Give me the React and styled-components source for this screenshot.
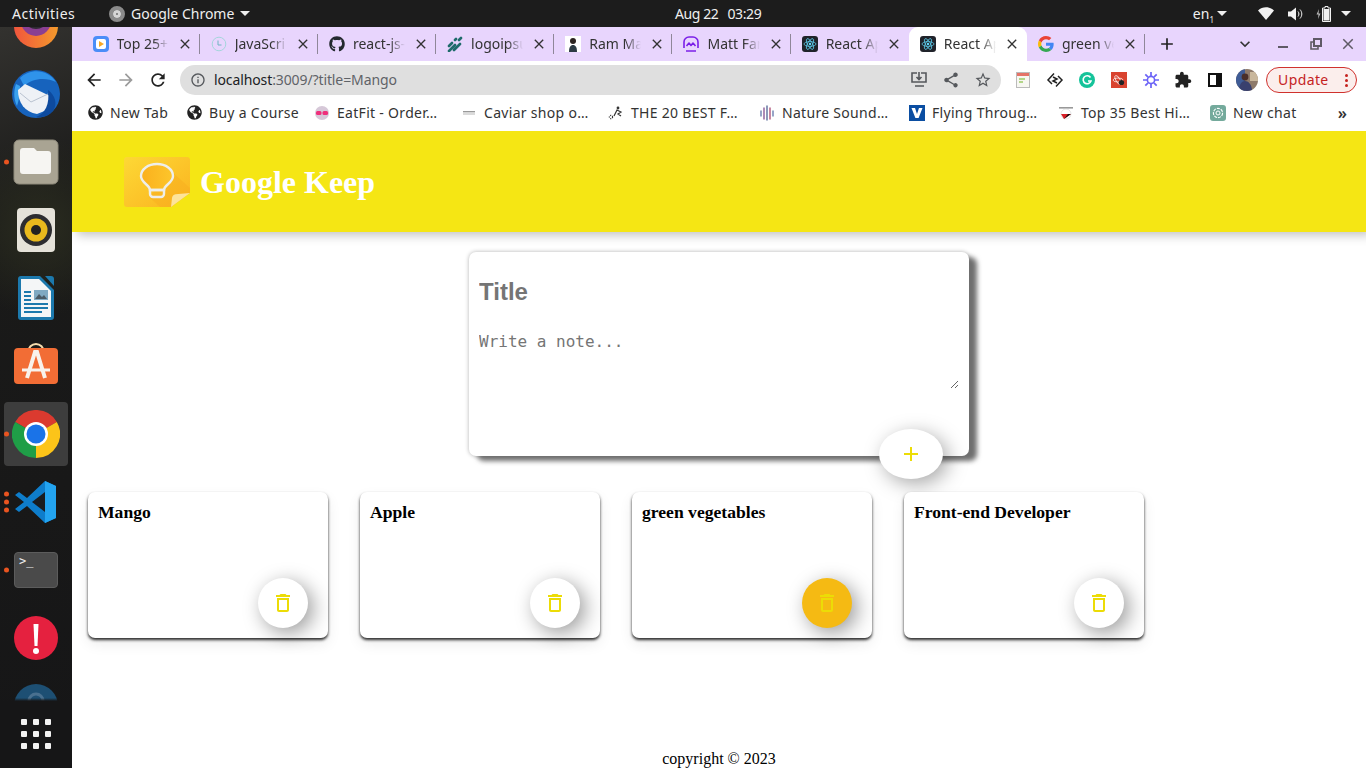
import React from 'react';
import styled, { createGlobalStyle } from 'styled-components';
import { FaGithub, FaGlobeAmericas } from 'react-icons/fa';

const UI_FONT = '"Noto Sans", "Open Sans", sans-serif';
const SERIF = '"Liberation Serif", "Times New Roman", serif';

const GlobalStyle = createGlobalStyle`
    html, body {
        margin: 0;
        height: 100%;
        overflow: hidden;
    }
    #root {
        height: 768px;
    }
`;

const paths = {
    back: 'M20 11H7.83l5.59-5.59L12 4l-8 8 8 8 1.41-1.41L7.83 13H20v-2z',
    forward: 'M12 4l-1.41 1.41L16.17 11H4v2h12.17l-5.58 5.59L12 20l8-8z',
    reload: 'M17.65 6.35C16.2 4.9 14.21 4 12 4c-4.42 0-7.99 3.58-7.99 8s3.57 8 7.99 8c3.73 0 6.84-2.55 7.73-6h-2.08c-.82 2.33-3.04 4-5.65 4-3.31 0-6-2.69-6-6s2.69-6 6-6c1.66 0 3.14.69 4.22 1.78L13 11h7V4l-2.35 2.35z',
    close: 'M19 6.41L17.59 5 12 10.59 6.41 5 5 6.41 10.59 12 5 17.59 6.41 19 12 13.41 17.59 19 19 17.59 13.41 12z',
    add: 'M19 13h-6v6h-2v-6H5v-2h6V5h2v6h6v2z',
    chevron: 'M7.41 8.59L12 13.17l4.59-4.58L18 10l-6 6-6-6z',
    info: 'M11 7h2v2h-2zm0 4h2v6h-2zm1-9C6.48 2 2 6.48 2 12s4.48 10 10 10 10-4.48 10-10S17.52 2 12 2zm0 18c-4.41 0-8-3.59-8-8s3.59-8 8-8 8 3.59 8 8-3.59 8-8 8z',
    share: 'M18 16.08c-.76 0-1.44.3-1.96.77L8.91 12.7c.05-.23.09-.46.09-.7s-.04-.47-.09-.7l7.05-4.11c.54.5 1.25.81 2.04.81 1.66 0 3-1.34 3-3s-1.34-3-3-3-3 1.34-3 3c0 .24.04.47.09.7L8.04 9.81C7.5 9.31 6.79 9 6 9c-1.66 0-3 1.34-3 3s1.34 3 3 3c.79 0 1.5-.31 2.04-.81l7.12 4.16c-.05.21-.08.43-.08.65 0 1.61 1.31 2.92 2.92 2.92s2.92-1.31 2.92-2.92-1.31-2.92-2.92-2.92z',
    star: 'M22 9.24l-7.19-.62L12 2 9.19 8.63 2 9.24l5.46 4.73L5.82 21 12 17.27 18.18 21l-1.63-7.03L22 9.24zM12 15.4l-3.76 2.27 1-4.28-3.32-2.88 4.38-.38L12 6.1l1.71 4.04 4.38.38-3.32 2.88 1 4.28L12 15.4z',
    trash: 'M6 19c0 1.1.9 2 2 2h8c1.1 0 2-.9 2-2V7H6v12zM8 9h8v10H8V9zm7.5-5l-1-1h-5l-1 1H5v2h14V4h-3.5z',
    puzzle: 'M20.5 11H19V7c0-1.1-.9-2-2-2h-4V3.5C13 2.12 11.88 1 10.5 1S8 2.12 8 3.5V5H4c-1.1 0-1.99.9-1.99 2v3.8H3.5c1.49 0 2.7 1.21 2.7 2.7s-1.21 2.7-2.7 2.7H2V20c0 1.1.9 2 2 2h3.8v-1.5c0-1.49 1.21-2.7 2.7-2.7 1.49 0 2.7 1.21 2.7 2.7V22H17c1.1 0 2-.9 2-2v-4h1.5c1.38 0 2.5-1.12 2.5-2.5S21.88 11 20.5 11z',
};

const Glyph = ({ name, size = 16, color = 'currentColor' }) => (
    <svg width={size} height={size} viewBox="0 0 24 24" fill={color} style={{ flex: 'none' }}>
        <path d={paths[name]} />
    </svg>
);

/* ---------- favicons ---------- */

const PlayFav = () => (
    <svg width="16" height="16" viewBox="0 0 16 16">
        <rect width="16" height="16" rx="4" fill="#4b8df8" />
        <rect x="3" y="3" width="10" height="10" rx="2" fill="#fff" />
        <path d="M6 5l5 3-5 3z" fill="#f9a825" />
    </svg>
);

const ClockFav = () => (
    <svg width="16" height="16" viewBox="0 0 16 16" fill="none" stroke="#a5d5dc" strokeWidth="1">
        <circle cx="8" cy="8" r="6.8" />
        <path d="M7 4.5V9h3.5" stroke="#6fb5c2" />
    </svg>
);

const LogoipsumFav = () => (
    <svg width="16" height="16" viewBox="0 0 16 16" fill="none" stroke="#1e6b6b" strokeWidth="2.6" strokeLinecap="round">
        <path d="M2 10l3-3M2 15l6-6M7 14l6-6M9 3L8 4M14 2l-2 2" />
    </svg>
);

const PortraitFav = () => (
    <svg width="16" height="16" viewBox="0 0 16 16">
        <rect width="16" height="16" fill="#fff" />
        <circle cx="8" cy="5" r="3" fill="#2b2320" />
        <path d="M4 16c0-5 1.500-7 4-7s4 2 4 7z" fill="#2c3a44" />
    </svg>
);

const MattFav = () => (
    <svg width="16" height="16" viewBox="0 0 16 16" fill="none" stroke="#7b1fe8" strokeWidth="1.6" strokeLinejoin="round">
        <path d="M1 12V6a5 5 0 0 1 5-5h4a5 5 0 0 1 5 5v6M3 15h10" />
        <path d="M3.500 10l2.500-3 2 2.500L10 7l2.500 3" />
    </svg>
);

const ReactFav = () => (
    <svg width="16" height="16" viewBox="0 0 16 16" fill="none" stroke="#61dafb" strokeWidth=".7">
        <rect width="16" height="16" rx="3" fill="#20232a" stroke="none" />
        <ellipse cx="8" cy="8" rx="6" ry="2.4" />
        <ellipse cx="8" cy="8" rx="6" ry="2.4" transform="rotate(60 8 8)" />
        <ellipse cx="8" cy="8" rx="6" ry="2.4" transform="rotate(120 8 8)" />
        <circle cx="8" cy="8" r="1.2" fill="#61dafb" stroke="none" />
    </svg>
);

const GoogleFav = () => (
    <svg width="16" height="16" viewBox="0 0 48 48">
        <path fill="#EA4335" d="M24 9.5c3.54 0 6.71 1.22 9.21 3.6l6.85-6.85C35.9 2.38 30.47 0 24 0 14.62 0 6.51 5.38 2.56 13.22l7.98 6.19C12.43 13.72 17.74 9.5 24 9.5z" />
        <path fill="#4285F4" d="M46.98 24.55c0-1.57-.15-3.09-.38-4.55H24v9.02h12.94c-.58 2.96-2.26 5.48-4.78 7.18l7.73 6c4.51-4.18 7.09-10.36 7.09-17.65z" />
        <path fill="#FBBC05" d="M10.53 28.59c-.48-1.45-.76-2.99-.76-4.59s.27-3.14.76-4.59l-7.98-6.19C.92 16.46 0 20.12 0 24c0 3.88.92 7.54 2.56 10.78l7.97-6.19z" />
        <path fill="#34A853" d="M24 48c6.48 0 11.93-2.13 15.89-5.81l-7.73-6c-2.15 1.45-4.92 2.3-8.16 2.3-6.26 0-11.57-4.22-13.47-9.91l-7.98 6.19C6.51 42.62 14.62 48 24 48z" />
    </svg>
);

const tabs = [
    { title: 'Top 25+', icon: <PlayFav /> },
    { title: 'JavaScri', icon: <ClockFav /> },
    { title: 'react-js-', icon: <FaGithub size={16} color="#24292f" /> },
    { title: 'logoipsu', icon: <LogoipsumFav /> },
    { title: 'Ram Ma', icon: <PortraitFav /> },
    { title: 'Matt Far', icon: <MattFav /> },
    { title: 'React Ap', icon: <ReactFav /> },
    { title: 'React Ap', icon: <ReactFav />, active: true },
    { title: 'green ve', icon: <GoogleFav /> },
];

/* ---------- bookmark and extension icons ---------- */

const EatFitMark = () => (
    <svg width="16" height="16" viewBox="0 0 16 16">
        <circle cx="8" cy="8" r="7" fill="#d6c8d8" />
        <rect x="2" y="6" width="5.5" height="4" rx="1.5" fill="#ef2f7b" />
        <rect x="8.5" y="6" width="5.5" height="4" rx="1.5" fill="#ef2f7b" />
    </svg>
);

const CaviarMark = () => (
    <svg width="16" height="16" viewBox="0 0 16 16" fill="#9a9a9a">
        <rect x="2" y="6" width="12" height="1.4" />
        <rect x="2" y="8.4" width="12" height="1.2" fill="#c4c4c4" />
    </svg>
);

const RiderMark = () => (
    <svg width="16" height="16" viewBox="0 0 16 16" fill="none" stroke="#333" strokeWidth="1.2">
        <circle cx="3" cy="12" r="1.6" strokeDasharray="1 1" />
        <path d="M6 11l3-6 4 2-3 2 3 2" />
        <circle cx="10" cy="3" r="1.4" fill="#333" stroke="none" />
    </svg>
);

const NatureMark = () => (
    <svg width="16" height="16" viewBox="0 0 16 16" strokeWidth="1.4" strokeLinecap="round">
        <path d="M2 6v5" stroke="#6a7fb0" />
        <path d="M5 3v11" stroke="#8a5a98" />
        <path d="M8 1v14" stroke="#5b6e9c" />
        <path d="M11 3v11" stroke="#b0557a" />
        <path d="M14 6v5" stroke="#6a7fb0" />
    </svg>
);

const VimeoMark = () => (
    <svg width="16" height="16" viewBox="0 0 16 16">
        <rect width="16" height="16" fill="#0b4ea2" />
        <path d="M2.500 3H6l2 6 2-6h3.500L9.600 13H6.400z" fill="#fff" />
    </svg>
);

const HikesMark = () => (
    <svg width="16" height="16" viewBox="0 0 16 16">
        <rect x="1" y="2" width="14" height="1.6" fill="#999" />
        <circle cx="8" cy="9" r="5" fill="#fff" stroke="#ccc" strokeWidth=".5" />
        <path d="M3 9h10l-7 5z" fill="#d81f26" />
        <path d="M6 14l4-5h3z" fill="#111" />
    </svg>
);

const ChatGptMark = () => (
    <svg width="16" height="16" viewBox="0 0 16 16" fill="none">
        <rect width="16" height="16" rx="3" fill="#74aa9c" />
        <circle cx="8" cy="8" r="4.6" stroke="#fff" strokeWidth="1.1" strokeDasharray="3 1" />
        <circle cx="8" cy="8" r="2" stroke="#fff" strokeWidth="1" />
    </svg>
);

const bookmarks = [
    { label: 'New Tab', width: 60, icon: <FaGlobeAmericas size={15} color="#222" /> },
    { label: 'Buy a Course', width: 89, icon: <FaGlobeAmericas size={15} color="#222" /> },
    { label: 'EatFit - Order…', width: 108, icon: <EatFitMark /> },
    { label: 'Caviar shop o…', width: 108, icon: <CaviarMark /> },
    { label: 'THE 20 BEST F…', width: 112, icon: <RiderMark /> },
    { label: 'Nature Sound…', width: 111, icon: <NatureMark /> },
    { label: 'Flying Throug…', width: 110, icon: <VimeoMark /> },
    { label: 'Top 35 Best Hi…', width: 113, icon: <HikesMark /> },
    { label: 'New chat', width: 66, icon: <ChatGptMark /> },
];

const extensions = [
    <svg key="notes" width="16" height="16" viewBox="0 0 16 16">
        <rect x="1.500" y=".5" width="13" height="15" fill="#f7f7f2" stroke="#bbb" />
        <rect x="2" y="1" width="12" height="3" fill="#e57368" />
        <path d="M4 7h6M4 10h4" stroke="#9ccc65" strokeWidth="1.4" />
    </svg>,
    <svg key="diamond" width="18" height="18" viewBox="0 0 18 18" fill="none" stroke="#222" strokeWidth="1.5">
        <path d="M8 2.500L2 9l4 4M10 15.500L16 9l-4-4M7 6l4 2-4 2 4 2" />
    </svg>,
    <svg key="grammarly" width="16" height="16" viewBox="0 0 16 16" fill="none">
        <circle cx="8" cy="8" r="8" fill="#15c39a" />
        <path d="M11.500 5.500A4 4 0 1 0 12 9H9" stroke="#fff" strokeWidth="1.6" />
    </svg>,
    <svg key="bug" width="16" height="16" viewBox="0 0 16 16" fill="none">
        <rect width="16" height="16" fill="#d9432f" />
        <ellipse cx="7" cy="8" rx="5" ry="2" stroke="#fff" strokeWidth=".7" />
        <ellipse cx="7" cy="8" rx="5" ry="2" stroke="#fff" strokeWidth=".7" transform="rotate(60 7 8)" />
        <circle cx="10.500" cy="10.500" r="2.600" fill="#222" />
    </svg>,
    <svg key="burst" width="16" height="16" viewBox="0 0 16 16" fill="none" stroke="#6b63f6">
        <circle cx="8" cy="8" r="3.600" strokeWidth="1.600" />
        <path d="M8 0v4M8 12v4M0 8h4M12 8h4M2.300 2.300l2.800 2.800M10.900 10.900l2.800 2.800M13.700 2.300l-2.800 2.800M5.100 10.900l-2.800 2.800" strokeWidth="1.700" />
    </svg>,
    <Glyph key="puzzle" name="puzzle" size={18} color="#222" />,
    <svg key="panel" width="16" height="16" viewBox="0 0 16 16">
        <rect x="2" y="2" width="12" height="12" fill="none" stroke="#111" strokeWidth="2" />
        <rect x="9" y="2" width="5" height="12" fill="#111" />
    </svg>,
    <svg key="avatar" width="22" height="22" viewBox="0 0 22 22">
        <defs>
            <clipPath id="avatarClip"><circle cx="11" cy="11" r="11" /></clipPath>
        </defs>
        <g clipPath="url(#avatarClip)">
            <rect width="22" height="22" fill="#8e7a6a" />
            <rect width="9" height="22" fill="#3f5c96" />
            <rect x="14" y="3" width="8" height="9" fill="#c9b79c" />
            <circle cx="9" cy="8" r="3.400" fill="#4a2f2a" />
            <path d="M3 22c0-7 3-10 6-10s7 3 7 10z" fill="#39406e" />
        </g>
    </svg>,
];

/* ---------- dock icons ---------- */

const FirefoxIcon = () => (
    <svg width="44" height="44" viewBox="0 0 44 44">
        <defs>
            <linearGradient id="foxRing" x1="0" y1="0" x2="1" y2="0">
                <stop offset="0" stopColor="#f0553d" />
                <stop offset="1" stopColor="#f49a2c" />
            </linearGradient>
        </defs>
        <circle cx="22" cy="22" r="22" fill="url(#foxRing)" />
        <circle cx="22" cy="17" r="15" fill="#8a3f92" />
        <circle cx="22" cy="12" r="13" fill="#2e2a33" />
    </svg>
);

const ThunderbirdIcon = () => (
    <svg width="48" height="48" viewBox="0 0 48 48">
        <circle cx="24" cy="24" r="24" fill="#1763bd" />
        <path d="M8 8C18-2 36-1 44 12 34 7 20 8 12 16z" fill="#2f93ea" />
        <path d="M4 14c-2 6-3 14 1 22 2-6 3-14 3-20z" fill="#3aa2ef" />
        <path d="M6 20l7-6 25 12-3 14-10 4C13 42 6 33 6 20z" fill="#eef1f6" />
        <path d="M8 23l11 9 17-8" fill="none" stroke="#b9c2d0" strokeWidth="1" />
        <path d="M36 20c7 5 10 14 5 21-4 5-10 7-17 6 9-3 14-13 12-27z" fill="#0d4a9e" />
    </svg>
);

const FilesIcon = () => (
    <svg width="46" height="46" viewBox="0 0 46 46">
        <rect x="1" y="1" width="44" height="44" rx="5" fill="#a9a493" stroke="#8e8a7b" />
        <path d="M7 12a3 3 0 0 1 3-3h11l3 3h11a3 3 0 0 1 3 3v17a3 3 0 0 1-3 3H10a3 3 0 0 1-3-3z" fill="#f6f5f2" />
    </svg>
);

const RhythmboxIcon = () => (
    <svg width="38" height="44" viewBox="0 0 38 44">
        <rect width="38" height="44" rx="4" fill="#e5e2d9" />
        <circle cx="19" cy="22" r="16" fill="#2d2d30" />
        <circle cx="19" cy="22" r="11.500" fill="#e9b91d" />
        <circle cx="19" cy="22" r="5" fill="#222" />
    </svg>
);

const WriterIcon = () => (
    <svg width="36" height="44" viewBox="0 0 36 44">
        <path d="M0 3a3 3 0 0 1 3-3h19l14 14v27a3 3 0 0 1-3 3H3a3 3 0 0 1-3-3z" fill="#1c79ad" />
        <path d="M3 3h18l12 12v26H3z" fill="#f4f6f7" />
        <path d="M27 0h6a3 3 0 0 1 3 3v7z" fill="#1c79ad" />
        <path d="M6 16h7M6 20h7M6 24h7M6 28h24M6 32h24M6 36h18" stroke="#1c79ad" strokeWidth="1.800" />
        <rect x="16" y="14" width="14" height="10" fill="#7fa9c2" />
        <path d="M17 23l4-5 3 3 2-2 3 4z" fill="#4b5b66" />
    </svg>
);

const SoftwareIcon = () => (
    <svg width="44" height="48" viewBox="0 0 44 48">
        <path d="M14 11c0-12 16-12 16 0" fill="none" stroke="#f4dcae" strokeWidth="2" />
        <rect y="6" width="44" height="36" rx="4" fill="#f26d35" />
        <path d="M13 36l8-26h2l8 26" fill="none" stroke="#f8f2ec" strokeWidth="4" />
        <path d="M8 28h28" stroke="#f8f2ec" strokeWidth="3" />
    </svg>
);

const ChromeIcon = () => (
    <svg width="48" height="48" viewBox="0 0 48 48">
        <path d="M24 24L3.200 12A24 24 0 0 1 44.800 12z" fill="#db3a2f" />
        <path d="M24 24L44.800 12A24 24 0 0 1 24 48z" fill="#fcc419" />
        <path d="M24 24V48A24 24 0 0 1 3.200 12z" fill="#1f9e47" />
        <circle cx="24" cy="24" r="12" fill="#fff" />
        <circle cx="24" cy="24" r="9.500" fill="#1a73e8" />
    </svg>
);

const VsCodeIcon = () => (
    <svg width="44" height="44" viewBox="0 0 44 44">
        <path d="M31 1l11 5v32l-11 5L13 26l-8 6-4-3 9-7-9-7 4-3 8 6z" fill="#0e7dcb" />
        <path d="M31 1l11 5v32l-11 5z" fill="#23a4f0" />
        <path d="M31 12L18 22l13 10z" fill="#1a1d20" />
    </svg>
);

const AlertIcon = () => (
    <svg width="44" height="44" viewBox="0 0 44 44">
        <circle cx="22" cy="22" r="22" fill="#e5213f" />
        <path d="M19.500 8h5l-1 22h-3z" fill="#fff" />
        <circle cx="22" cy="35" r="3" fill="#fff" />
    </svg>
);

const LastIcon = () => (
    <svg width="44" height="44" viewBox="0 0 44 44">
        <circle cx="22" cy="22" r="22" fill="#1d4f73" />
        <circle cx="22" cy="17" r="7" fill="none" stroke="#49708f" strokeWidth="3" />
    </svg>
);

/* ---------- system tray ---------- */

const WifiIcon = () => (
    <svg width="16" height="13" viewBox="0 0 16 13">
        <path d="M8 13L0 3.500C4.500-.8 11.500-.8 16 3.500z" fill="#f2f2f2" />
    </svg>
);

const VolumeIcon = () => (
    <svg width="16" height="14" viewBox="0 0 16 14" fill="none">
        <path d="M0 4.500h3L8 .5v13l-5-4H0z" fill="#f2f2f2" />
        <path d="M10 4.500c1.200 1.500 1.200 3.500 0 5M12 2.500c2.400 2.800 2.400 6.200 0 9" stroke="#f2f2f2" />
    </svg>
);

const BatteryIcon = () => (
    <svg width="16" height="16" viewBox="0 0 16 16" fill="none">
        <path d="M3 3L.5 8.500h2L2 13l2.500-5.500h-2z" fill="#b9b9b9" />
        <path d="M9 .5h3v1.500h2.500v13.500h-8V2H9z" stroke="#f2f2f2" />
        <rect x="7.500" y="3" width="6" height="11.500" fill="#f2f2f2" />
    </svg>
);

const Caret = styled.span`
    flex: none;
    width: 0;
    height: 0;
    border-left: 5px solid transparent;
    border-right: 5px solid transparent;
    border-top: 5px solid #eee;
`;

/* ---------- layout ---------- */

const Desktop = styled.div`
    width: 1366px;
    height: 768px;
    display: flex;
    flex-direction: column;
    overflow: hidden;
    font-family: ${UI_FONT};
`;

const TopBar = styled.header`
    flex: none;
    height: 27px;
    background: #1c1c1c;
    color: #efefef;
    font-size: 14px;
    display: flex;
    align-items: center;
    padding-left: 12px;
`;

const Activities = styled.span`
    width: 97px;
    letter-spacing: 0.5px;
`;

const AppMenu = styled.span`
    width: 566px;
    display: flex;
    align-items: center;
    gap: 6px;
`;

const AppBadge = styled.span`
    width: 16px;
    height: 16px;
    box-sizing: border-box;
    border-radius: 50%;
    background: #6d6d6d;
    border: 4px solid #8b8b8b;
    box-shadow: inset 0 0 0 3px #d6d6d6;
`;

const Clock = styled.span`
    display: flex;
    gap: 9px;
    letter-spacing: -0.4px;
`;

const Tray = styled.div`
    margin-left: auto;
    display: flex;
    align-items: center;
    padding-right: 15px;
`;

const TrayItem = styled.span`
    display: flex;
    margin-left: ${(p) => p.$gap}px;
`;

const Sub = styled.sub`
    font-size: 8px;
    line-height: 0;
`;

const Main = styled.div`
    flex: 1;
    min-height: 0;
    display: flex;
`;

const Dock = styled.aside`
    flex: none;
    width: 72px;
    position: relative;
    overflow: hidden;
    background:
        radial-gradient(circle at 40px 200px, #2a2c1f 0, transparent 90px),
        linear-gradient(160deg, #33322f 0, #1a1a19 25%, #161617 100%);
`;

const DockList = styled.div`
    margin-top: -35px;
    display: flex;
    flex-direction: column;
`;

const DockItem = styled.div`
    flex: none;
    height: 68px;
    display: flex;
    align-items: center;
    justify-content: center;
    position: relative;
`;

const Highlight = styled.div`
    width: 64px;
    height: 64px;
    border-radius: 4px;
    background: rgba(255, 255, 255, 0.16);
    display: flex;
    align-items: center;
    justify-content: center;
`;

const RunDots = styled.div`
    position: absolute;
    left: 4px;
    top: 50%;
    transform: translateY(-50%);
    display: flex;
    flex-direction: column;
    gap: 3px;
`;

const RunDot = styled.span`
    width: 5px;
    height: 5px;
    border-radius: 50%;
    background: #e95420;
`;

const TerminalTile = styled.div`
    width: 44px;
    height: 36px;
    box-sizing: border-box;
    border-radius: 4px;
    background: #4a4a4a;
    border: 1px solid #5c5c5c;
    color: #eee;
    font: 12px/12px "DejaVu Sans Mono", monospace;
    padding: 2px 4px;
`;

const AppGrid = styled.div`
    position: absolute;
    left: 0;
    right: 0;
    bottom: 0;
    height: 70px;
    background: linear-gradient(#16161700, #161617 3px);
    display: flex;
    align-items: flex-start;
    justify-content: center;
    padding-top: 21px;
    box-sizing: border-box;
`;

const GridDots = styled.div`
    display: grid;
    grid-template-columns: repeat(3, 6px);
    gap: 6px;
`;

const GridDot = styled.span`
    width: 6px;
    height: 6px;
    border-radius: 1px;
    background: #f2f2f2;
`;

const Browser = styled.div`
    flex: 1;
    min-width: 0;
    display: flex;
    flex-direction: column;
    background: #fff;
`;

const TabStrip = styled.div`
    flex: none;
    height: 34px;
    background: #e8d5fd;
    display: flex;
    align-items: stretch;
    padding-left: 9.5px;
    color: #333;
`;

const Tab = styled.div`
    flex: none;
    width: 118.2px;
    box-sizing: border-box;
    padding: 0 7px 0 11px;
    display: flex;
    align-items: center;
    gap: 8px;
    position: relative;
    font-size: 14px;
    background: ${(p) => (p.$active ? '#fff' : 'transparent')};
    border-radius: 9px 9px 0 0;

    &::after {
        content: '';
        display: ${(p) => (p.$divider ? 'block' : 'none')};
        position: absolute;
        right: 0;
        top: 7px;
        bottom: 7px;
        width: 1px;
        background: #8f8799;
    }
`;

const TabTitle = styled.span`
    flex: 1;
    min-width: 0;
    padding-bottom: 2px;
    white-space: nowrap;
    -webkit-mask-image: linear-gradient(to right, #000 70%, transparent 100%);
    mask-image: linear-gradient(to right, #000 70%, transparent 100%);
`;

const NewTab = styled.span`
    display: flex;
    margin-left: 12px;
    align-self: center;
    color: #222;
`;

const TabSearch = styled.span`
    display: flex;
    margin-left: 58px;
    align-self: center;
    color: #333;
`;

const WindowControls = styled.div`
    margin-left: auto;
    padding-right: 9px;
    display: flex;
    align-items: center;
    gap: 14.5px;
    color: #5f5a66;
`;

const Toolbar = styled.div`
    flex: none;
    height: 35px;
    box-sizing: border-box;
    padding: 4px 0 1px 12px;
    display: flex;
    align-items: center;
    background: #fff;
`;

const NavIcons = styled.div`
    display: flex;
    gap: 12px;
    color: #222;
`;

const NavButton = styled.span`
    display: flex;
    color: ${(p) => (p.$off ? '#9b9b9b' : '#222')};
`;

const Omnibox = styled.div`
    flex: none;
    width: 821px;
    height: 30px;
    margin-left: 12px;
    box-sizing: border-box;
    padding: 0 9px 0 10px;
    border-radius: 15px;
    background: #dfdfdf;
    display: flex;
    align-items: center;
    color: #55585c;
`;

const Url = styled.span`
    margin-left: 8px;
    padding-bottom: 2px;
    font-size: 14px;
    letter-spacing: -0.11px;
    color: #5f6368;
`;

const Host = styled.span`
    color: #202124;
`;

const OmniActions = styled.div`
    margin-left: auto;
    display: flex;
    gap: 14px;
`;

const Extensions = styled.div`
    margin-left: 6px;
    display: flex;
`;

const ExtensionSlot = styled.span`
    width: 32px;
    display: flex;
    align-items: center;
    justify-content: center;
`;

const UpdatePill = styled.div`
    width: 91px;
    height: 26px;
    margin-left: 3px;
    box-sizing: border-box;
    border: 1px solid #d0312d;
    border-radius: 13px;
    background: #fbeeec;
    color: #c5221f;
    font-size: 14px;
    letter-spacing: 0.4px;
    display: flex;
    align-items: center;
    padding: 0 8px 2px 11px;
`;

const KebabDots = styled.span`
    margin-left: auto;
    padding-top: 2px;
    display: flex;
    flex-direction: column;
    gap: 2px;
`;

const KebabDot = styled.i`
    width: 3px;
    height: 3px;
    border-radius: 50%;
    background: #c5221f;
`;

const BookmarkBar = styled.div`
    flex: none;
    height: 35px;
    box-sizing: border-box;
    padding: 0 0 2px 15px;
    display: flex;
    align-items: center;
    gap: 16px;
    background: #fff;
    font-size: 14px;
    color: #333;
`;

const Bookmark = styled.span`
    flex: none;
    display: flex;
    align-items: center;
    gap: 7px;
`;

const BookmarkIcon = styled.span`
    width: 16px;
    height: 16px;
    display: flex;
    align-items: center;
    justify-content: center;
`;

const BookmarkLabel = styled.span`
    width: ${(p) => p.$width}px;
    white-space: nowrap;
    letter-spacing: 0.3px;
`;

const MoreBookmarks = styled.span`
    margin-left: auto;
    padding-right: 19px;
    font-size: 16px;
    font-weight: 600;
    color: #333;
`;

/* ---------- the keep app ---------- */

const Page = styled.main`
    flex: 1;
    min-height: 0;
    display: flex;
    flex-direction: column;
    background: #fff;
    overflow: hidden;
    font-family: ${SERIF};
`;

const AppHeader = styled.div`
    flex: none;
    height: 101px;
    box-sizing: border-box;
    padding-left: 52px;
    display: flex;
    align-items: center;
    gap: 10px;
    background: #f5e614;
    box-shadow: 5px 3px 10px rgba(0, 0, 0, 0.25);
    position: relative;
`;

const AppTitle = styled.h1`
    margin: 2px 0 0;
    font-size: 32px;
    font-weight: bold;
    color: #fff;
`;

const NoteForm = styled.form`
    flex: none;
    width: 500px;
    height: 204px;
    box-sizing: border-box;
    margin: 20px auto 0;
    padding: 26px 10px;
    display: flex;
    flex-direction: column;
    gap: 26px;
    border-radius: 7px;
    background: #fff;
    box-shadow: 8px 5px 5px #6f6f6f, 0 0 4px rgba(0, 0, 0, 0.3);
    position: relative;
`;

const TitleInput = styled.input`
    border: none;
    outline: none;
    padding: 0;
    height: 28px;
    font-family: "Liberation Sans", Arial, sans-serif;
    font-size: 24px;
    font-weight: bold;
`;

const NoteInput = styled.textarea`
    border: none;
    outline: none;
    padding: 0;
    font-family: "DejaVu Sans Mono", monospace;
    font-size: 16px;
`;

const AddButton = styled.button`
    position: absolute;
    right: 26px;
    bottom: -23px;
    width: 64px;
    height: 50px;
    border: none;
    border-radius: 50%;
    background: #fff;
    display: flex;
    align-items: center;
    justify-content: center;
    padding: 0;
    box-shadow: 5px 5px 20px rgba(0, 0, 0, 0.35);
`;

const CardRow = styled.div`
    flex: none;
    margin-top: 36px;
    padding-left: 16px;
    display: flex;
    gap: 32px;
`;

const Card = styled.article`
    width: 240px;
    height: 146px;
    box-sizing: border-box;
    padding: 10px;
    border-radius: 7px;
    background: #fff;
    box-shadow: 0 2px 3px #2a2a2a, 0 6px 14px rgba(0, 0, 0, 0.08);
    position: relative;
`;

const CardTitle = styled.h2`
    margin: 0;
    font-size: 17.6px;
    line-height: 21px;
    font-weight: bold;
    color: #000;
`;

const DeleteButton = styled.button`
    position: absolute;
    right: 20px;
    bottom: 10px;
    width: 50px;
    height: 50px;
    border: none;
    border-radius: 50%;
    padding: 0;
    background: ${(p) => (p.$hover ? '#f5ba13' : '#fff')};
    display: flex;
    align-items: center;
    justify-content: center;
    box-shadow: 5px 5px 20px rgba(0, 0, 0, 0.4);
`;

const Footer = styled.footer`
    margin-top: auto;
    text-align: center;
    font-size: 16px;
    line-height: 18px;
    color: #000;
`;

const KeepLogo = () => (
    <svg width="66" height="50" viewBox="0 0 66 50">
        <defs>
            <linearGradient id="noteFill" x1="0" y1="0" x2="1" y2="1">
                <stop offset="0" stopColor="#fdd835" />
                <stop offset="1" stopColor="#fbb31f" />
            </linearGradient>
            <linearGradient id="bulbFill" x1="0" y1="0" x2="1" y2="0">
                <stop offset="0" stopColor="#fbb01d" />
                <stop offset="1" stopColor="#fdc62b" />
            </linearGradient>
        </defs>
        <path d="M3 0h60a3 3 0 0 1 3 3v33L47 50H3a3 3 0 0 1-3-3V3a3 3 0 0 1 3-3z" fill="url(#noteFill)" />
        <path d="M47 14l19 17v5L47 50H36L25 40z" fill="#f7ab1e" opacity=".4" />
        <path d="M47 50l1-9c.2-2 1.500-3.500 3.500-3.800L66 36z" fill="#fde39a" />
        <path d="M26 33c0-5-9-7-9-14a16 12 0 0 1 32 0c0 7-9 9-9 14z" fill="url(#bulbFill)" stroke="#eeeeea" strokeWidth="2.400" />
        <path d="M26 33h14v4a3 3 0 0 1-3 3h-8a3 3 0 0 1-3-3z" fill="none" stroke="#eeeeea" strokeWidth="2.400" />
    </svg>
);

const notes = ['Mango', 'Apple', 'green vegetables', 'Front-end Developer'];

const App = () => {
    return (
        <Desktop>
            <GlobalStyle />
            <TopBar>
                <Activities>Activities</Activities>
                <AppMenu>
                    <AppBadge />
                    Google Chrome
                    <Caret />
                </AppMenu>
                <Clock><span>Aug 22</span><span>03:29</span></Clock>
                <Tray>
                    <span>en<Sub>1</Sub></span>
                    <TrayItem $gap={3}><Caret /></TrayItem>
                    <TrayItem $gap={31}><WifiIcon /></TrayItem>
                    <TrayItem $gap={14}><VolumeIcon /></TrayItem>
                    <TrayItem $gap={12}><BatteryIcon /></TrayItem>
                    <TrayItem $gap={9}><Caret /></TrayItem>
                </Tray>
            </TopBar>
            <Main>
                <Dock>
                    <DockList>
                        <DockItem><FirefoxIcon /></DockItem>
                        <DockItem><ThunderbirdIcon /></DockItem>
                        <DockItem>
                            <RunDots><RunDot /></RunDots>
                            <FilesIcon />
                        </DockItem>
                        <DockItem><RhythmboxIcon /></DockItem>
                        <DockItem><WriterIcon /></DockItem>
                        <DockItem><SoftwareIcon /></DockItem>
                        <DockItem>
                            <RunDots><RunDot /></RunDots>
                            <Highlight><ChromeIcon /></Highlight>
                        </DockItem>
                        <DockItem>
                            <RunDots><RunDot /><RunDot /><RunDot /></RunDots>
                            <VsCodeIcon />
                        </DockItem>
                        <DockItem>
                            <RunDots><RunDot /></RunDots>
                            <TerminalTile>&gt;_</TerminalTile>
                        </DockItem>
                        <DockItem><AlertIcon /></DockItem>
                        <DockItem><LastIcon /></DockItem>
                    </DockList>
                    <AppGrid>
                        <GridDots>
                            {Array.from({ length: 9 }, (_, i) => <GridDot key={i} />)}
                        </GridDots>
                    </AppGrid>
                </Dock>
                <Browser>
                    <TabStrip>
                        {tabs.map((tab, i) => (
                            <Tab
                                key={i}
                                $active={tab.active}
                                $divider={!tab.active && !(tabs[i + 1] && tabs[i + 1].active)}
                            >
                                {tab.icon}
                                <TabTitle>{tab.title}</TabTitle>
                                <Glyph name="close" size={16} />
                            </Tab>
                        ))}
                        <NewTab><Glyph name="add" size={20} /></NewTab>
                        <TabSearch><Glyph name="chevron" size={20} /></TabSearch>
                        <WindowControls>
                            <svg width="18" height="18" viewBox="0 0 18 18"><rect x="4" y="11" width="10" height="2" fill="currentColor" /></svg>
                            <svg width="18" height="18" viewBox="0 0 18 18" fill="none" stroke="currentColor" strokeWidth="1.600"><rect x="7" y="4" width="7" height="7" strokeWidth="2" /><path d="M6.500 7H4v7h7v-2" /></svg>
                            <Glyph name="close" size={18} />
                        </WindowControls>
                    </TabStrip>
                    <Toolbar>
                        <NavIcons>
                            <NavButton><Glyph name="back" size={20} /></NavButton>
                            <NavButton $off><Glyph name="forward" size={20} /></NavButton>
                            <NavButton><Glyph name="reload" size={20} /></NavButton>
                        </NavIcons>
                        <Omnibox>
                            <Glyph name="info" size={16} />
                            <Url><Host>localhost</Host>:3009/?title=Mango</Url>
                            <OmniActions>
                                <svg width="18" height="18" viewBox="0 0 18 18" fill="none" stroke="currentColor" strokeWidth="1.600">
                                    <path d="M7 2H2v9h14V2h-5M9 1v7M6.500 6L9 8.500 11.500 6M5 15h9" />
                                </svg>
                                <Glyph name="share" size={18} />
                                <Glyph name="star" size={18} />
                            </OmniActions>
                        </Omnibox>
                        <Extensions>
                            {extensions.map((icon) => (
                                <ExtensionSlot key={icon.key}>{icon}</ExtensionSlot>
                            ))}
                        </Extensions>
                        <UpdatePill>
                            Update
                            <KebabDots><KebabDot /><KebabDot /><KebabDot /></KebabDots>
                        </UpdatePill>
                    </Toolbar>
                    <BookmarkBar>
                        {bookmarks.map((item) => (
                            <Bookmark key={item.label}>
                                <BookmarkIcon>{item.icon}</BookmarkIcon>
                                <BookmarkLabel $width={item.width}>{item.label}</BookmarkLabel>
                            </Bookmark>
                        ))}
                        <MoreBookmarks>»</MoreBookmarks>
                    </BookmarkBar>
                    <Page>
                        <AppHeader>
                            <KeepLogo />
                            <AppTitle>Google Keep</AppTitle>
                        </AppHeader>
                        <NoteForm onSubmit={(e) => e.preventDefault()}>
                            <TitleInput placeholder="Title" />
                            <NoteInput rows={3} placeholder="Write a note..." />
                            <AddButton type="button" aria-label="Add">
                                <Glyph name="add" size={24} color="#ecdc06" />
                            </AddButton>
                        </NoteForm>
                        <CardRow>
                            {notes.map((note, i) => (
                                <Card key={note}>
                                    <CardTitle>{note}</CardTitle>
                                    <DeleteButton type="button" aria-label="Delete" $hover={i === 2}>
                                        <Glyph name="trash" size={24} color="#ecdc06" />
                                    </DeleteButton>
                                </Card>
                            ))}
                        </CardRow>
                        <Footer>copyright © 2023</Footer>
                    </Page>
                </Browser>
            </Main>
        </Desktop>
    );
};

export default App;
